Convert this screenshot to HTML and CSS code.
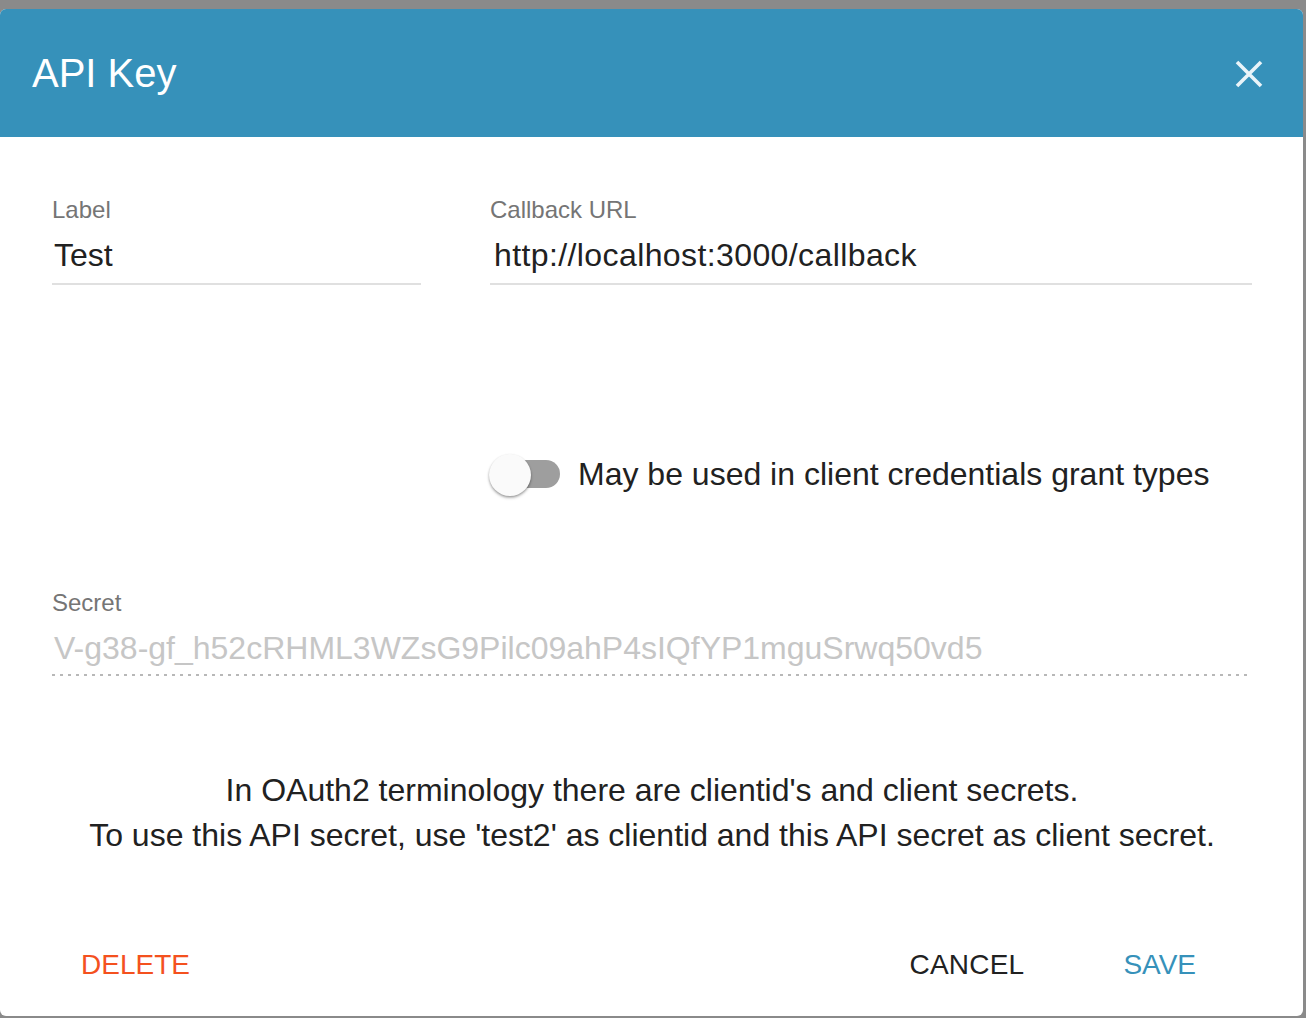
FILE: index.html
```html
<!DOCTYPE html>
<html lang="en">
<head>
<meta charset="utf-8">
<title>API Key</title>
<link rel="stylesheet" href="styles.css">
</head>
<body>
<div class="dialog">
  <header class="dialog-header">
    <h1 class="dialog-title">API Key</h1>
    <button class="close-btn" aria-label="Close">
      <svg width="28" height="28" viewBox="0 0 28 28"><path d="M2 2 L26 26 M26 2 L2 26" stroke="currentColor" stroke-width="3.6" fill="none"/></svg>
    </button>
  </header>
  <div class="dialog-content">
    <div class="fields">
      <div class="field">
        <div class="field-label">Label</div>
        <div class="field-input">Test</div>
      </div>
      <div class="field">
        <div class="field-label">Callback URL</div>
        <div class="field-input field-input-wide">http://localhost:3000/callback</div>
      </div>
      <div class="toggle-row">
        <span class="switch"><span class="switch-track"></span><span class="switch-thumb"></span></span>
        <span class="toggle-label">May be used in client credentials grant types</span>
      </div>
    </div>
    <div class="field field-disabled">
      <div class="field-label">Secret</div>
      <div class="field-input">V-g38-gf_h52cRHML3WZsG9Pilc09ahP4sIQfYP1mguSrwq50vd5</div>
    </div>
    <p class="note">In OAuth2 terminology there are clientid's and client secrets.<br>To use this API secret, use 'test2' as clientid and this API secret as client secret.</p>
  </div>
  <div class="dialog-actions">
    <button class="btn btn-delete">DELETE</button>
    <div class="actions-right">
      <button class="btn btn-cancel">CANCEL</button>
      <button class="btn btn-save">SAVE</button>
    </div>
  </div>
</div>
</body>
</html>
```

FILE: styles.css
```css
html, body {
  margin: 0;
  padding: 0;
}
body {
  background: #8a8a8a;
  padding-top: 9px;
  height: 1018px;
  box-sizing: border-box;
  overflow: hidden;
  font-family: "Liberation Sans", Arial, Helvetica, sans-serif;
}
.dialog {
  width: 1303px;
  height: 1007px;
  background: #ffffff;
  border-radius: 6px;
  overflow: hidden;
  display: flex;
  flex-direction: column;
}
.dialog-header {
  height: 128px;
  flex: none;
  background: #3691ba;
  display: flex;
  align-items: center;
  justify-content: space-between;
  padding: 0 40px 0 32px;
}
.dialog-title {
  margin: 0;
  font-weight: normal;
  font-size: 40px;
  line-height: 48px;
  color: #ffffff;
}
.close-btn {
  border: 0;
  background: none;
  padding: 0;
  width: 28px;
  height: 28px;
  color: #e9f4f9;
  display: block;
  margin-top: 2px;
}
.close-btn svg {
  display: block;
}
.dialog-content {
  padding: 59px 51px 0 52px;
}
.fields {
  display: grid;
  grid-template-columns: 369px 762px;
  column-gap: 69px;
}
.field-label {
  font-size: 24px;
  line-height: 28px;
  color: #757575;
}
.field-input {
  margin-top: 11px;
  font-size: 32px;
  line-height: 40px;
  color: #212121;
  padding: 0 0 8px 2px;
  border-bottom: 2px solid #e0e0e0;
  white-space: nowrap;
}
.field-input-wide {
  padding-left: 4px;
  letter-spacing: 0.4px;
}
.toggle-row {
  grid-column: 2;
  margin-top: 165px;
  height: 48px;
  display: flex;
  align-items: center;
}
.switch {
  position: relative;
  width: 70px;
  height: 28px;
  flex: none;
}
.switch-track {
  display: block;
  width: 70px;
  height: 28px;
  border-radius: 14px;
  background: #9e9e9e;
}
.switch-thumb {
  position: absolute;
  left: -1px;
  top: -6px;
  width: 42px;
  height: 42px;
  border-radius: 50%;
  background: #fafafa;
  box-shadow: 0 2px 3px rgba(0,0,0,0.25), 0 1px 2px rgba(0,0,0,0.2);
}
.toggle-label {
  margin-left: 18px;
  font-size: 32px;
  line-height: 40px;
  color: #212121;
}
.field-disabled {
  margin-top: 91px;
}
.field-disabled .field-input {
  color: #c6c6c6;
  border-bottom: 0;
  background-image: linear-gradient(to right, #b8b8b8 2.6px, transparent 2.6px);
  background-size: 8px 2px;
  background-repeat: repeat-x;
  background-position: left bottom;
  padding-bottom: 8px;
}
.note {
  margin: 92px 0 0 0;
  text-align: center;
  font-size: 32px;
  line-height: 45px;
  color: #212121;
}
.dialog-actions {
  margin-top: auto;
  padding: 0 75px 15px 49px;
  display: flex;
  justify-content: space-between;
  align-items: center;
}
.actions-right {
  display: flex;
  gap: 35px;
}
.btn {
  border: 0;
  background: none;
  font-family: inherit;
  font-size: 28px;
  line-height: 72px;
  height: 72px;
  padding: 0 32px;
  min-width: 128px;
  text-align: center;
}
.btn-delete {
  color: #f4511e;
}
.btn-cancel {
  color: #212121;
  letter-spacing: 0.2px;
}
.btn-save {
  color: #3691ba;
}
```
